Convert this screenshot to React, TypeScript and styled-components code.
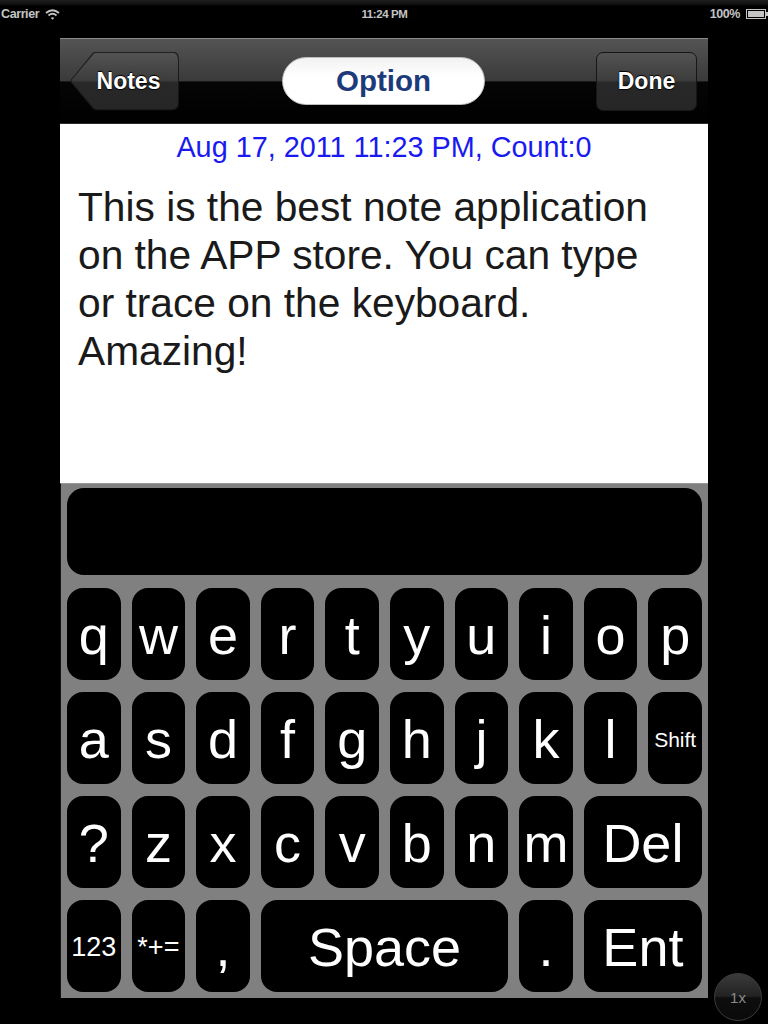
import React from "react";
import styled, { createGlobalStyle } from "styled-components";

const Global = createGlobalStyle`
  html, body {
    margin: 0;
    padding: 0;
    background: #000;
    font-family: "Liberation Sans", Arial, Helvetica, sans-serif;
  }
  #root { min-height: 1024px; }
`;

const Screen = styled.div`
  position: relative;
  width: 768px;
  height: 1024px;
  background: #000;
  overflow: hidden;
`;

const StatusBar = styled.div`
  height: 24px;
  display: flex;
  align-items: center;
  justify-content: space-between;
  padding: 4px 0 0 1px;
  box-sizing: border-box;
  background: linear-gradient(#1f1f1f 0px, #0c0c0c 5px, #000 6px);
  color: #c4c4c4;
  font-size: 12.5px;
  font-weight: 700;
  letter-spacing: -0.4px;
`;

const StatusGroup = styled.div<{ $end?: boolean }>`
  display: flex;
  align-items: center;
  gap: 6px;
  width: 120px;
  justify-content: ${(p) => (p.$end ? "flex-end" : "flex-start")};
`;

const Time = styled.div`
  font-size: 11.5px;
`;

const Frame = styled.div`
  margin: 14px 0 0 60px;
  width: 648px;
  display: flex;
  flex-direction: column;
`;

const NavBar = styled.div`
  height: 86px;
  box-sizing: border-box;
  border-top: 1px solid #8a8a8a;
  border-bottom: 1px solid #2a2a2a;
  background: linear-gradient(#545454 0%, #3a3a3a 50%, #050505 51%, #000 100%);
  display: grid;
  grid-template-columns: 1fr auto 1fr;
  align-items: center;
  padding: 0 11px 0 10px;
`;

const BackButton = styled.div`
  justify-self: start;
  width: 109px;
  height: 59px;
  clip-path: path("M23 1 Q25 0 28 0 H102 Q109 0 109 7 V52 Q109 59 102 59 H28 Q25 59 23 58 L1 31 Q0 29.5 1 28 Z");
  background: linear-gradient(#202020, #101010);
  display: flex;
  align-items: center;
  justify-content: center;
  position: relative;
  &::before {
    content: "";
    position: absolute;
    inset: 1px;
    clip-path: path("M23 1 Q25 0 28 0 H100 Q107 0 107 7 V50 Q107 57 100 57 H28 Q25 57 23 56 L1 30 Q0 28.5 1 27 Z");
    background: linear-gradient(#535353 0%, #3c3c3c 48%, #282828 52%, #262626 100%);
  }
`;

const BarButton = styled.div`
  justify-self: end;
  width: 101px;
  height: 59px;
  box-sizing: border-box;
  border-radius: 7px;
  border: 1px solid #161616;
  background: linear-gradient(#535353 0%, #3c3c3c 48%, #282828 52%, #262626 100%);
  display: flex;
  align-items: center;
  justify-content: center;
`;

const BarLabel = styled.span<{ $shift?: number }>`
  position: relative;
  color: #fff;
  font-size: 23px;
  font-weight: 700;
  text-shadow: 0 -1px 1px #000, 0 1px 1px #000;
  margin-left: ${(p) => p.$shift ?? 0}px;
`;

const OptionPill = styled.div`
  width: 203px;
  height: 48px;
  box-sizing: border-box;
  border-radius: 24px;
  background: linear-gradient(#f2f2f2, #fff 40%);
  border: 1px solid #bdbdbd;
  display: flex;
  align-items: center;
  justify-content: center;
  color: #1d3b7a;
  font-size: 29.5px;
  font-weight: 700;
`;

const Content = styled.div`
  height: 359px;
  background: #fff;
  box-sizing: border-box;
  padding: 7px 48px 0 18px;
`;

const DateLine = styled.div`
  text-align: center;
  margin-right: -30px;
  color: #1a1af0;
  font-size: 28.8px;
  line-height: 32px;
  white-space: nowrap;
`;

const NoteText = styled.div`
  margin-top: 20px;
  color: #1a1a1a;
  font-size: 40.7px;
  line-height: 48px;
`;

const Keyboard = styled.div`
  height: 515px;
  box-sizing: border-box;
  background: #808080;
  border-top: 1px solid #9a9a9a;
  border-left: 1px solid #111;
  padding: 4px 6px 0 6px;
  display: flex;
  flex-direction: column;
  gap: 13px;
`;

const Display = styled.div`
  height: 87px;
  border-radius: 17px;
  background: #000;
`;

const KeyGrid = styled.div`
  display: grid;
  grid-template-columns: repeat(10, 1fr);
  grid-auto-rows: 92px;
  gap: 12px 11px;
`;

const Key = styled.div<{ $span?: number; $size?: number }>`
  grid-column: span ${(p) => p.$span ?? 1};
  background: #000;
  border-radius: 16px;
  display: flex;
  align-items: center;
  justify-content: center;
  color: #fff;
  font-size: ${(p) => p.$size ?? 54}px;
  line-height: 1;
  padding-top: 2px;
`;

const ZoomButton = styled.div`
  position: absolute;
  left: 714px;
  top: 973px;
  width: 48px;
  height: 48px;
  box-sizing: border-box;
  border-radius: 50%;
  border: 1px solid #3c3c3c;
  background: linear-gradient(#3a3a3a 0%, #222 48%, #0e0e0e 52%, #0a0a0a 100%);
  color: #8a8a8a;
  font-size: 15px;
  display: flex;
  align-items: center;
  justify-content: center;
`;

type KeyDef = { label: string; span?: number; size?: number };

const keys: KeyDef[] = [
  ..."qwertyuiop".split("").map((l) => ({ label: l })),
  ..."asdfghjkl".split("").map((l) => ({ label: l })),
  { label: "Shift", size: 21 },
  ..."?zxcvbnm".split("").map((l) => ({ label: l })),
  { label: "Del", span: 2 },
  { label: "123", size: 27 },
  { label: "*+=", size: 27 },
  { label: "," },
  { label: "Space", span: 4 },
  { label: "." },
  { label: "Ent", span: 2 },
];

const Wifi = () => (
  <svg width="15" height="11" viewBox="0 0 15 11">
    <path d="M1 4 Q7.5 -1.5 14 4" stroke="#c4c4c4" strokeWidth="1.8" fill="none" />
    <path d="M3.5 6.5 Q7.5 3 11.5 6.5" stroke="#c4c4c4" strokeWidth="1.8" fill="none" />
    <path d="M5.8 9 L7.5 10.8 L9.2 9 Q7.5 7.6 5.8 9 Z" fill="#c4c4c4" />
  </svg>
);

const Battery = () => (
  <svg width="22" height="10" viewBox="0 0 22 10">
    <rect x="0.5" y="0.5" width="19" height="9" fill="none" stroke="#c4c4c4" />
    <rect x="2" y="2" width="16" height="6" fill="#c4c4c4" />
    <rect x="20" y="3" width="2" height="4" fill="#c4c4c4" />
  </svg>
);

export default function App() {
  return (
    <Screen>
      <Global />
      <StatusBar>
        <StatusGroup>
          <span>Carrier</span>
          <Wifi />
        </StatusGroup>
        <Time>11:24 PM</Time>
        <StatusGroup $end>
          <span>100%</span>
          <Battery />
        </StatusGroup>
      </StatusBar>
      <Frame>
        <NavBar>
          <BackButton>
            <BarLabel $shift={8}>Notes</BarLabel>
          </BackButton>
          <OptionPill>Option</OptionPill>
          <BarButton>
            <BarLabel>Done</BarLabel>
          </BarButton>
        </NavBar>
        <Content>
          <DateLine>Aug 17, 2011 11:23 PM, Count:0</DateLine>
          <NoteText>
            This is the best note application on the APP store. You can type or trace on the keyboard. Amazing!
          </NoteText>
        </Content>
        <Keyboard>
          <Display />
          <KeyGrid>
            {keys.map((k, i) => (
              <Key key={i} $span={k.span} $size={k.size}>
                {k.label}
              </Key>
            ))}
          </KeyGrid>
        </Keyboard>
      </Frame>
      <ZoomButton>1x</ZoomButton>
    </Screen>
  );
}
